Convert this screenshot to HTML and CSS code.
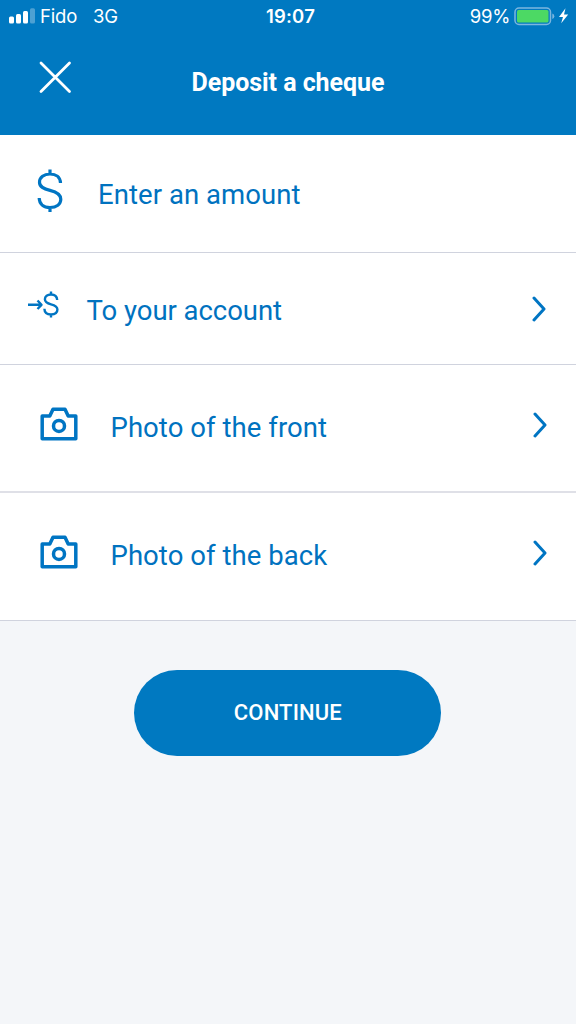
FILE: index.html
```html
<!DOCTYPE html>
<html lang="en">
<head>
<meta charset="utf-8">
<title>Deposit a cheque</title>
<link rel="stylesheet" href="styles.css">
</head>
<body>
<svg class="defs" width="0" height="0" aria-hidden="true">
  <symbol id="dollar" viewBox="0 0 26 46">
    <path d="M13 1.500V6M13 39.500V44M23.500 15C23.200 9 19 6 13 6S2.500 9.200 2.500 14.200C2.500 19 6.500 20.800 13 22.400S23.800 26 23.800 31.300C23.800 36.300 19.500 39.500 13 39.500S2.300 36 2.200 30"/>
  </symbol>
  <symbol id="camera" viewBox="0 0 38 34">
    <path d="M2.200 9H9.800L13 2.200H25L28.200 9H35.800V31.700H2.200Z"/>
    <circle cx="19" cy="18.900" r="5.500"/>
  </symbol>
  <symbol id="chevron" viewBox="0 0 14 26">
    <path d="M2 2L12 13L2 24"/>
  </symbol>
</svg>
<header class="header">
  <div class="status">
    <div class="status-left">
      <svg class="signal" width="26" height="16" viewBox="0 0 26 16">
        <rect x="0" y="8.500" width="5" height="7" rx="1.500"/>
        <rect x="7" y="6" width="5" height="9.500" rx="1.500"/>
        <rect x="14" y="3" width="5" height="12.500" rx="1.500"/>
        <rect class="signal-off" x="21" y=".3" width="5" height="15.200" rx="1.500"/>
      </svg>
      <span class="carrier">Fido</span>
      <span class="network">3G</span>
    </div>
    <span class="clock">19:07</span>
    <div class="status-right">
      <span class="percent">99%</span>
      <svg class="battery" width="55" height="19" viewBox="0 0 55 19">
        <rect class="battery-shell" x="1" y="1" width="35.500" height="16.500" rx="4"/>
        <rect class="battery-fill" x="3" y="3" width="31.500" height="12.500" rx="1.500"/>
        <path class="battery-cap" d="M38.300 6.500Q40.300 7 40.300 9.300T38.300 12Z"/>
        <path class="bolt" d="M51.500 1.200L45 10H49L47.200 16.300L54.200 7.600H50Z"/>
      </svg>
    </div>
  </div>
  <div class="titlebar">
    <svg class="close" width="33" height="33" viewBox="0 0 33 33"><path d="M2 2L30.500 30.500M30.500 2L2 30.500"/></svg>
    <h1 class="title">Deposit a cheque</h1>
  </div>
</header>
<main>
  <div class="row row-amount">
    <svg class="icon icon-dollar" width="26" height="46"><use href="#dollar"/></svg>
    <span class="label">Enter an amount</span>
  </div>
  <div class="row row-account">
    <svg class="icon icon-transfer" width="32" height="28" viewBox="0 0 32 28">
      <path d="M1 13.800H14M10.500 9.500L14.500 13.800L10.500 18"/>
      <path d="M24 .5V3.500M24 23.500V26.500M30.200 9C30 5.500 27.500 3.500 24 3.500S17.900 5.300 17.900 8.300S20.300 12.400 24 13.300S30.400 15.500 30.400 18.600S27.800 23.500 24 23.500S17.500 21.400 17.400 17.800"/>
    </svg>
    <span class="label">To your account</span>
    <svg class="chevron" width="14" height="26"><use href="#chevron"/></svg>
  </div>
  <div class="row row-photo">
    <svg class="icon icon-camera" width="38" height="34"><use href="#camera"/></svg>
    <span class="label">Photo of the front</span>
    <svg class="chevron" width="14" height="26"><use href="#chevron"/></svg>
  </div>
  <div class="row row-photo row-back">
    <svg class="icon icon-camera" width="38" height="34"><use href="#camera"/></svg>
    <span class="label">Photo of the back</span>
    <svg class="chevron" width="14" height="26"><use href="#chevron"/></svg>
  </div>
  <button class="continue" type="button">CONTINUE</button>
</main>
</body>
</html>
```
FILE: styles.css
```css
* { box-sizing: border-box; }
body {
  margin: 0;
  min-height: 1024px;
  background: #f4f6f9;
  font-family: Roboto, sans-serif;
}
svg { display: block; flex: none; }
.defs { position: absolute; }

.header {
  height: 135px;
  background: #0079c1;
  color: #fff;
}
.status {
  display: grid;
  grid-template-columns: 1fr auto 1fr;
  height: 32px;
  padding: 0 7px 0 9px;
  font: 18.500px/33px Inter, sans-serif;
}
.status-left, .status-right { display: flex; align-items: flex-start; }
.status-right { justify-content: flex-end; }
.signal { margin-top: 7.500px; fill: #fff; }
.signal-off { opacity: .3; }
.carrier { margin-left: 5px; letter-spacing: -.2px; }
.network { margin-left: 16px; letter-spacing: -.2px; }
.clock { padding-left: 3px; font-weight: 600; font-size: 18.500px; line-height: 32px; letter-spacing: .2px; }
.percent { margin-right: 4px; letter-spacing: -.3px; }
.battery { margin-top: 7px; }
.battery-shell { fill: none; stroke: #7bb6df; stroke-width: 1.500; }
.battery-fill { fill: #4cd964; }
.battery-cap { fill: #7bb6df; }
.bolt { fill: #fff; }

.titlebar {
  display: grid;
  grid-template-columns: 100px 1fr 100px;
  height: 103px;
}
.close {
  margin: 29px 0 0 39px;
  fill: none;
  stroke: #fff;
  stroke-width: 2.800;
  stroke-linecap: round;
}
.title {
  margin: 36px 0 0;
  font-size: 25px;
  line-height: 30px;
  font-weight: 700;
  letter-spacing: -.05px;
  text-align: center;
  white-space: nowrap;
}

.row {
  display: flex;
  align-items: flex-start;
  border-bottom: 1px solid #d0d3de;
  background: #fff;
  color: #0072bf;
}
.icon, .chevron {
  fill: none;
  stroke: #0075c3;
  stroke-width: 3;
  stroke-linecap: round;
  stroke-linejoin: round;
}
.label {
  font-size: 27.500px;
  line-height: 34px;
  letter-spacing: .06px;
  white-space: nowrap;
}
.chevron { margin-left: auto; }

.row-amount { height: 118px; padding: 33px 28px 0 36.500px; }
.row-amount .label { margin: 10px 0 0 35.500px; }
.icon-dollar { stroke-width: 3.200; stroke-linecap: butt; }

.row-account { height: 112px; padding: 38px 30px 0 27px; }
.row-account .label { margin: 3px 0 0 27.500px; letter-spacing: -.04px; }
.row-account .chevron { margin-top: 5px; }
.icon-transfer { stroke-width: 2.400; stroke-linecap: butt; }

.row-photo {
  height: 128px;
  padding: 42px 29px 0 40px;
  border-bottom: 2px solid #dfe0e7;
}
.row-photo .label { margin: 4px 0 0 32.500px; }
.row-photo .chevron { margin-top: 5px; }
.icon-camera { stroke-width: 3.500; }
.row-back { border-bottom: 1px solid #d0d3de; }

.continue {
  display: block;
  width: 307px;
  height: 86px;
  margin: 49px 0 0 134.400px;
  padding: 0;
  border: 0;
  border-radius: 43px;
  background: #0079c1;
  color: #fff;
  font: 500 22px/86px Roboto, sans-serif;
  letter-spacing: .15px;
}
```
